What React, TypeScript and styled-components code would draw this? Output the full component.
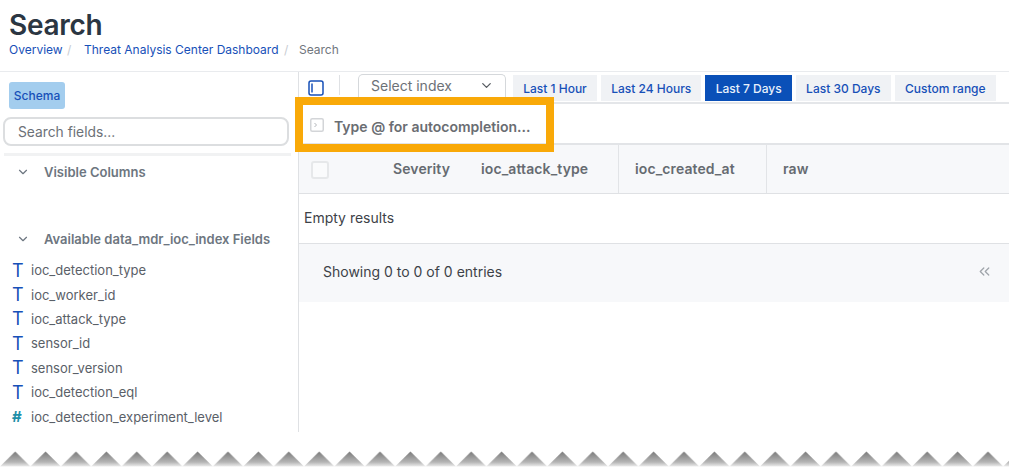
import styled, { createGlobalStyle } from 'styled-components'
import { ChevronDown, ChevronsLeft } from 'lucide-react'

const ranges = ['Last 1 Hour', 'Last 24 Hours', 'Last 7 Days', 'Last 30 Days', 'Custom range']
const fields = [
  { type: 'T', name: 'ioc_detection_type' },
  { type: 'T', name: 'ioc_worker_id' },
  { type: 'T', name: 'ioc_attack_type' },
  { type: 'T', name: 'sensor_id' },
  { type: 'T', name: 'sensor_version' },
  { type: 'T', name: 'ioc_detection_eql' },
  { type: '#', name: 'ioc_detection_experiment_level' },
]

const GlobalStyle = createGlobalStyle`
  html, body {
    margin: 0;
    background: #fff;
  }
  body {
    font-family: Inter, "Liberation Sans", sans-serif;
    overflow: hidden;
  }
`

const Page = styled.div`
  width: 1009px;
  height: 467px;
  display: flex;
  flex-direction: column;
  overflow: hidden;
`

const Header = styled.header`
  height: 72px;
  box-sizing: border-box;
  padding: 9px 0 0 9px;
  border-bottom: 1px solid #e9ebee;
  flex: none;
`

const Title = styled.h1`
  margin: 0;
  font-size: 28px;
  line-height: 33px;
  font-weight: 600;
  letter-spacing: -0.3px;
  color: #2b3642;
`

const Breadcrumbs = styled.nav`
  display: flex;
  font-size: 12px;
  line-height: 15px;
`

const Crumb = styled.a<{ $width: number }>`
  width: ${p => p.$width}px;
  color: #1750b8;
  white-space: nowrap;
`

const Sep = styled.span<{ $width: number; $inset: number }>`
  width: ${p => p.$width}px;
  box-sizing: border-box;
  padding-left: ${p => p.$inset}px;
  color: #c8ccd2;
`

const CurrentCrumb = styled.span`
  color: #70767d;
`

const Body = styled.div`
  height: 360px;
  display: flex;
  flex: none;
`

const Sidebar = styled.aside`
  width: 298px;
  flex: none;
  box-sizing: border-box;
  padding: 10px 9px 0 3px;
`

const SchemaTab = styled.button`
  display: block;
  width: 56px;
  height: 27px;
  margin-left: 6px;
  padding: 0;
  border: 0;
  border-radius: 3px;
  background: #a3cdee;
  color: #1750b8;
  font: 500 12px Inter, sans-serif;
`

const SearchField = styled.div`
  width: 286px;
  height: 29px;
  margin-top: 8px;
  box-sizing: border-box;
  padding: 1px 0 0 13px;
  display: flex;
  align-items: center;
  border: 2px solid #dcdee0;
  border-radius: 8px;
  font-size: 13.8px;
  color: #6c7177;
`

const Rule = styled.div`
  height: 3px;
  margin: 7px 0 0 1px;
  background: #f1f2f3;
  width: 287px;
`

const SectionHead = styled.div<{ $gap: number }>`
  display: flex;
  align-items: center;
  margin-top: ${p => p.$gap}px;
  padding-left: 13px;
  height: 18px;
  color: #6d7680;
  font-size: 13px;
  font-weight: 600;
  svg {
    margin-right: 14px;
  }
`

const FieldList = styled.ul`
  list-style: none;
  margin: 10px 0 0;
  padding: 0 0 0 9px;
`

const FieldRow = styled.li`
  height: 24.4px;
  display: flex;
  align-items: center;
  font-size: 13px;
  color: #5a6068;
`

const FieldType = styled.span<{ $numeric: boolean }>`
  width: 19px;
  font-size: ${p => (p.$numeric ? 15 : 18)}px;
  font-weight: ${p => (p.$numeric ? 700 : 400)};
  color: ${p => (p.$numeric ? '#1f8fa8' : '#1750b8')};
`

const Main = styled.main`
  position: relative;
  flex: 1;
  border-left: 1px solid #dfe1e4;
`

const Toolbar = styled.div`
  height: 32px;
  box-sizing: border-box;
  display: flex;
  padding-left: 9px;
  border-bottom: 2px solid #e4e6e9;
`

const ToggleButton = styled.span`
  display: flex;
  align-items: center;
  height: 30px;
  margin-top: 1px;
  svg {
    display: block;
  }
`

const ToolbarDivider = styled.span`
  width: 1px;
  height: 20px;
  margin: 3px 18px 0 15px;
  background: #dfe1e4;
`

const IndexSelect = styled.div`
  width: 148px;
  height: 28px;
  box-sizing: border-box;
  margin-top: 2px;
  padding: 0 11px 6px 12px;
  display: flex;
  align-items: center;
  justify-content: space-between;
  border: 1px solid #d5d8db;
  border-bottom: 0;
  border-radius: 5px 5px 0 0;
  font-size: 14px;
  color: #6c7177;
`

const RangeGroup = styled.div`
  display: flex;
  gap: 4px;
  margin: 3px 0 0 7px;
`

const RangeButton = styled.button<{ $active?: boolean }>`
  height: 26px;
  padding: 0 10.2px;
  border: 0;
  background: ${p => (p.$active ? '#0a50b8' : '#f0f2f5')};
  color: ${p => (p.$active ? '#e8f0fb' : '#1750b8')};
  font: 500 12px Inter, sans-serif;
  white-space: nowrap;
`

const QueryRow = styled.div`
  height: 41px;
  box-sizing: border-box;
  display: flex;
  align-items: center;
  padding: 5px 0 0 11px;
  border-bottom: 2px solid #e2e4e7;
  font-size: 14px;
  font-weight: 600;
  color: #6a6d72;
  svg {
    margin: 0 10px 3px 0;
  }
`

const TableHead = styled.div`
  height: 49px;
  box-sizing: border-box;
  display: grid;
  grid-template-columns: 78px 88px 153px 148px 1fr;
  background: #f7f8fa;
  border-bottom: 1px solid #dfe1e4;
`

const HeadCell = styled.div<{ $divided?: boolean }>`
  display: flex;
  align-items: center;
  padding: 0 0 2px 16px;
  font-size: 14px;
  font-weight: 600;
  letter-spacing: 0.1px;
  color: #666b71;
  white-space: nowrap;
  border-left: ${p => (p.$divided ? '1px solid #e2e4e7' : '0')};
`

const CheckCell = styled.div`
  display: flex;
  align-items: center;
  padding: 1px 0 0 12px;
`

const Checkbox = styled.span`
  width: 18px;
  height: 18px;
  box-sizing: border-box;
  border: 2px solid #e6e8ea;
  border-radius: 3px;
  background: #fafbfc;
`

const EmptyRow = styled.div`
  height: 50px;
  box-sizing: border-box;
  display: flex;
  align-items: center;
  padding: 0 0 2px 5px;
  border-bottom: 1px solid #dfe1e4;
  font-size: 14px;
  color: #3d4248;
`

const TableFooter = styled.div`
  height: 58px;
  box-sizing: border-box;
  display: flex;
  align-items: center;
  justify-content: space-between;
  padding: 0 16px 4px 24px;
  background: #f7f8fa;
  font-size: 14px;
  color: #3d4248;
  svg {
    color: #a0a5ab;
  }
`

const Highlight = styled.div`
  position: absolute;
  left: -4px;
  top: 25px;
  width: 259px;
  height: 55px;
  box-sizing: border-box;
  border: 8px solid #f9a908;
`

const Tear = styled.svg`
  display: block;
  flex: none;
  margin-top: 19px;
`

const TornEdge = () => (
  <Tear width="1009" height="16" viewBox="0 0 1009 16">
    <defs>
      <linearGradient id="tooth" x1="0" y1="0" x2="0" y2="1">
        <stop offset="0" stopColor="#7a7a7a" />
        <stop offset="0.7" stopColor="#b4b4b4" />
        <stop offset="1" stopColor="#ececec" />
      </linearGradient>
      <pattern id="teeth" width="30.4" height="16" patternUnits="userSpaceOnUse">
        <polygon points="0,15.5 15.2,0.5 30.4,15.5" fill="url(#tooth)" />
      </pattern>
    </defs>
    <rect width="1009" height="16" fill="url(#teeth)" />
  </Tear>
)

export default function App() {
  return (
    <Page>
      <GlobalStyle />
      <Header>
        <Title>Search</Title>
        <Breadcrumbs>
          <Crumb $width={53}>Overview</Crumb>
          <Sep $width={22} $inset={5}>/</Sep>
          <Crumb $width={200}>Threat Analysis Center Dashboard</Crumb>
          <Sep $width={15} $inset={0}>/</Sep>
          <CurrentCrumb>Search</CurrentCrumb>
        </Breadcrumbs>
      </Header>
      <Body>
        <Sidebar>
          <SchemaTab>Schema</SchemaTab>
          <SearchField>Search fields...</SearchField>
          <Rule />
          <SectionHead $gap={7}>
            <ChevronDown size={14} strokeWidth={2} />
            Visible Columns
          </SectionHead>
          <SectionHead $gap={49}>
            <ChevronDown size={14} strokeWidth={2} />
            Available data_mdr_ioc_index Fields
          </SectionHead>
          <FieldList>
            {fields.map(field => (
              <FieldRow key={field.name}>
                <FieldType $numeric={field.type === '#'}>{field.type}</FieldType>
                {field.name}
              </FieldRow>
            ))}
          </FieldList>
        </Sidebar>
        <Main>
          <Toolbar>
            <ToggleButton>
              <svg width="16" height="16" viewBox="0 0 16 16" fill="none">
                <rect x="1" y="1" width="14" height="14" rx="2" stroke="#1750b8" strokeWidth="1.5" />
                <path d="M4 3.5v9" stroke="#1750b8" strokeWidth="1.5" />
              </svg>
            </ToggleButton>
            <ToolbarDivider />
            <IndexSelect>
              Select index
              <ChevronDown size={15} strokeWidth={2} color="#555a60" />
            </IndexSelect>
            <RangeGroup>
              {ranges.map(range => (
                <RangeButton key={range} $active={range === 'Last 7 Days'}>
                  {range}
                </RangeButton>
              ))}
            </RangeGroup>
          </Toolbar>
          <QueryRow>
            <svg width="14" height="14" viewBox="0 0 14 14" fill="none">
              <rect x="0.75" y="0.75" width="12.5" height="12.5" rx="1.5" stroke="#d3d5d8" strokeWidth="1.5" />
              <path d="M4.5 5l2 2-2 2" stroke="#b4b7bb" strokeWidth="1" />
            </svg>
            Type @ for autocompletion...
          </QueryRow>
          <TableHead>
            <CheckCell>
              <Checkbox />
            </CheckCell>
            <HeadCell>Severity</HeadCell>
            <HeadCell>ioc_attack_type</HeadCell>
            <HeadCell $divided>ioc_created_at</HeadCell>
            <HeadCell $divided>raw</HeadCell>
          </TableHead>
          <EmptyRow>Empty results</EmptyRow>
          <TableFooter>
            Showing 0 to 0 of 0 entries
            <ChevronsLeft size={17} strokeWidth={1.8} />
          </TableFooter>
          <Highlight />
        </Main>
      </Body>
      <TornEdge />
    </Page>
  )
}
